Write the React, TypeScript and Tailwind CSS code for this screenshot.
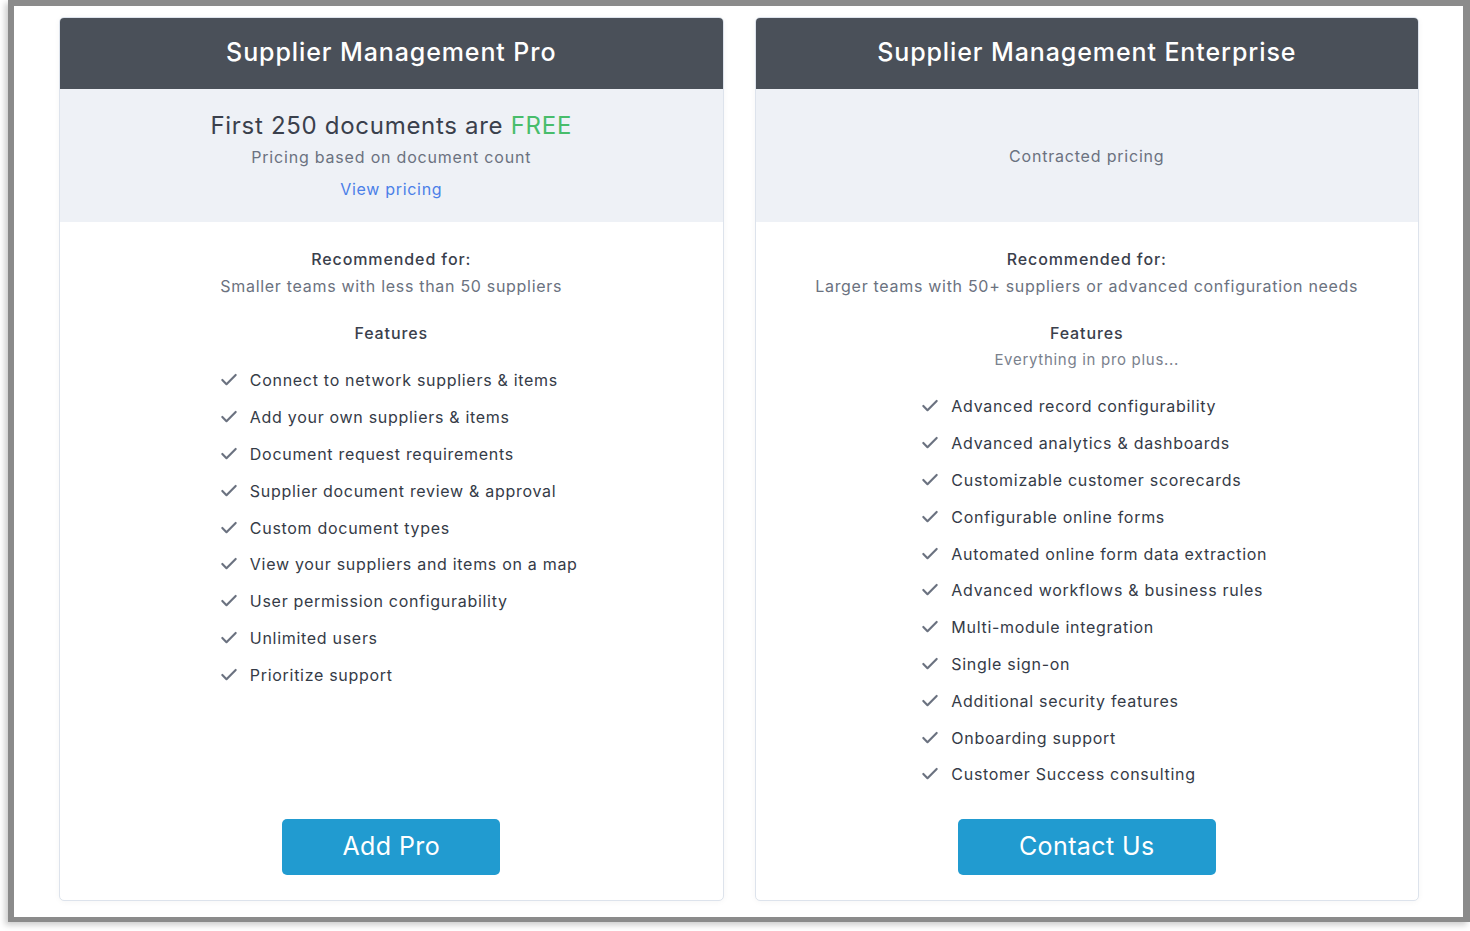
import React from "react";

const font = { fontFamily: "Inter, 'Open Sans', sans-serif" };

function CheckIcon() {
  return (
    <svg width="20" height="20" viewBox="0 0 24 24" fill="none" stroke="#6b7280" strokeWidth="2.6" strokeLinecap="round" strokeLinejoin="round" className="shrink-0">
      <path d="M20 6 9 17l-5-5" />
    </svg>
  );
}

function FeatureList({ items }: { items: string[] }) {
  return (
    <div className="flex justify-center">
      <ul className="mt-[15px] pl-[14px]">
        {items.map((t) => (
          <li key={t} className="flex items-center h-[36.8px] text-[16px] text-[#353b47]">
            <CheckIcon />
            <span className="ml-[11px]">{t}</span>
          </li>
        ))}
      </ul>
    </div>
  );
}

function Card({
  title,
  top,
  recommended,
  sub,
  items,
  button,
  buttonW,
}: {
  title: string;
  top: React.ReactNode;
  recommended: string;
  sub?: string;
  items: string[];
  button: string;
  buttonW: string;
}) {
  return (
    <div className="flex-1 h-[884px] flex flex-col border border-[#dde3ec] rounded-[5px] overflow-hidden bg-white shadow-[0_1px_6px_rgba(0,0,0,0.04)]">
      <div className="h-[71px] shrink-0 bg-[#4a5059] flex items-center justify-center text-white text-[25px] font-medium tracking-[0.9px] pb-[2px]">
        {title}
      </div>
      <div className="h-[133px] shrink-0 bg-[#eef1f6] flex flex-col items-center justify-center text-center">
        {top}
      </div>
      <div className="flex-1 flex flex-col pt-[24px] pb-[25px] text-center">
        <div className="leading-[27px] text-[16px] font-medium text-[#3a404c] tracking-[0.9px]">Recommended for:</div>
        <div className="leading-[27px] text-[16px] text-[#6b7280]">{recommended}</div>
        <div className="mt-[20px] leading-[27px] text-[16px] font-medium text-[#3a404c] tracking-[0.9px]">Features</div>
        {sub && <div className="leading-[26px] text-[15px] text-[#7a818d]">{sub}</div>}
        <div className="text-left">
          <FeatureList items={items} />
        </div>
        <div className="mt-auto flex justify-center">
          <button className={`${buttonW} h-[56px] rounded-[5px] bg-[#219bd0] text-white text-[25px] tracking-[0.4px]`}>{button}</button>
        </div>
      </div>
    </div>
  );
}

export default function App() {
  return (
    <div className="w-[1470px] h-[931px] bg-white overflow-hidden tracking-[0.7px]" style={font}>
      <div className="ml-[8px] w-[1462px] h-[922px] border-t-[6px] border-l-[6px] border-r-[7px] border-b-[5px] border-[#8b8b8b] bg-white shadow-[-3px_3px_6px_rgba(0,0,0,0.2)]">
        <div className="flex gap-[31px] pl-[45px] pr-[44px] pt-[11px]">
          <Card
            title="Supplier Management Pro"
            top={
              <>
                <div className="text-[24px] leading-[30px] text-[#3a404c] tracking-[0.7px]">
                  First 250 documents are <span className="text-[#48bd6b]">FREE</span>
                </div>
                <div className="mt-[4px] text-[16px] leading-[24px] text-[#6b7280] tracking-[0.8px]">Pricing based on document count</div>
                <div className="mt-[8px] text-[16px] leading-[24px] text-[#4b7fe8]">View pricing</div>
              </>
            }
            recommended="Smaller teams with less than 50 suppliers"
            items={[
              "Connect to network suppliers & items",
              "Add your own suppliers & items",
              "Document request requirements",
              "Supplier document review & approval",
              "Custom document types",
              "View your suppliers and items on a map",
              "User permission configurability",
              "Unlimited users",
              "Prioritize support",
            ]}
            button="Add Pro"
            buttonW="w-[218px]"
          />
          <Card
            title="Supplier Management Enterprise"
            top={<div className="text-[16px] leading-[24px] text-[#6b7280] tracking-[0.8px]">Contracted pricing</div>}
            recommended="Larger teams with 50+ suppliers or advanced configuration needs"
            sub="Everything in pro plus..."
            items={[
              "Advanced record configurability",
              "Advanced analytics & dashboards",
              "Customizable customer scorecards",
              "Configurable online forms",
              "Automated online form data extraction",
              "Advanced workflows & business rules",
              "Multi-module integration",
              "Single sign-on",
              "Additional security features",
              "Onboarding support",
              "Customer Success consulting",
            ]}
            button="Contact Us"
            buttonW="w-[258px]"
          />
        </div>
      </div>
    </div>
  );
}
